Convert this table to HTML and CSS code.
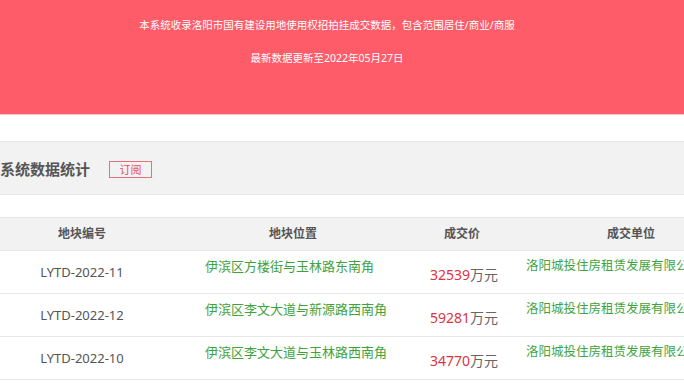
FILE: index.html
```html
<!DOCTYPE html>
<html lang="zh-CN">
<head>
<meta charset="utf-8">
<title>洛阳土地成交数据</title>
<link rel="stylesheet" href="styles.css">
</head>
<body>
<div class="page">
  <header class="banner">
    <p class="banner-line">本系统收录洛阳市国有建设用地使用权招拍挂成交数据，包含范围居住/商业/商服</p>
    <p class="banner-line second">最新数据更新至2022年05月27日</p>
  </header>

  <section class="section-head">
    <h2 class="section-title">系统数据统计</h2>
    <span class="subscribe">订阅</span>
  </section>

  <div class="table">
    <div class="row head">
      <div class="cell c1">地块编号</div>
      <div class="cell c2">地块位置</div>
      <div class="cell c3">成交价</div>
      <div class="cell c4">成交单位</div>
    </div>
    <div class="row">
      <div class="cell c1 code">LYTD-2022-11</div>
      <div class="cell c2 green">伊滨区方楼街与玉林路东南角</div>
      <div class="cell c3 price"><span class="num">32539</span>万元</div>
      <div class="cell c4 green">洛阳城投住房租赁发展有限公司</div>
    </div>
    <div class="row">
      <div class="cell c1 code">LYTD-2022-12</div>
      <div class="cell c2 green">伊滨区李文大道与新源路西南角</div>
      <div class="cell c3 price"><span class="num">59281</span>万元</div>
      <div class="cell c4 green">洛阳城投住房租赁发展有限公司</div>
    </div>
    <div class="row">
      <div class="cell c1 code">LYTD-2022-10</div>
      <div class="cell c2 green">伊滨区李文大道与玉林路西南角</div>
      <div class="cell c3 price"><span class="num">34770</span>万元</div>
      <div class="cell c4 green">洛阳城投住房租赁发展有限公司</div>
    </div>
  </div>
</div>
</body>
</html>
```

FILE: styles.css
```css
html, body {
  margin: 0;
  padding: 0;
  background: #fff;
}
body {
  width: 684px;
  height: 385px;
  overflow: hidden;
  font-family: "Noto Sans", "Noto Sans CJK SC", sans-serif;
  color: #555;
}
.page {
  width: 684px;
}
.banner {
  height: 115px;
  background: #fe5c69;
  border-bottom: 1px solid #fcc4c8;
  color: #fff;
  text-align: center;
  padding: 17px 30px 0 0;
  box-sizing: border-box;
}
.banner-line {
  margin: 0;
  font-size: 10.5px;
  line-height: 16px;
  white-space: nowrap;
}
.banner-line.second {
  margin-top: 17px;
}
.section-head {
  margin-top: 26px;
  height: 54px;
  box-sizing: border-box;
  border-top: 1px solid #e6e6e6;
  border-bottom: 1px solid #ebebeb;
  background: #f2f2f2;
  display: flex;
  align-items: center;
  padding-top: 2px;
}
.section-title {
  margin: 0;
  font-size: 15px;
  font-weight: bold;
  color: #555;
  line-height: 20px;
}
.subscribe {
  margin-left: 19px;
  width: 43px;
  height: 17px;
  box-sizing: border-box;
  border: 1px solid #e9707a;
  color: #e5505c;
  font-size: 11px;
  line-height: 15px;
  text-align: center;
}
.table {
  margin-top: 22px;
  width: 760px;
  border-top: 1px solid #e6e6e6;
}
.row {
  display: grid;
  grid-template-columns: 164px 258px 80px 258px;
  height: 43px;
  box-sizing: border-box;
  border-bottom: 1px solid #e8e8e8;
}
.row.head {
  height: 33px;
  background: #f2f2f2;
}
.cell {
  white-space: nowrap;
}
.head .cell {
  text-align: center;
  font-size: 12px;
  font-weight: bold;
  color: #555;
  line-height: 32px;
}
.code {
  text-align: center;
  font-size: 13px;
  color: #555;
  line-height: 16px;
  padding-top: 13px;
}
.green {
  color: #3ea33e;
  font-size: 13px;
  line-height: 16px;
  padding-top: 7px;
}
.c2.green {
  padding-left: 41px;
}
.c4.green {
  padding-left: 24px;
  font-size: 12.5px;
}
.price {
  text-align: center;
  font-size: 14px;
  color: #666;
  line-height: 18px;
  padding-top: 15px;
  padding-left: 4px;
}
.num {
  color: #e0333f;
}
```
